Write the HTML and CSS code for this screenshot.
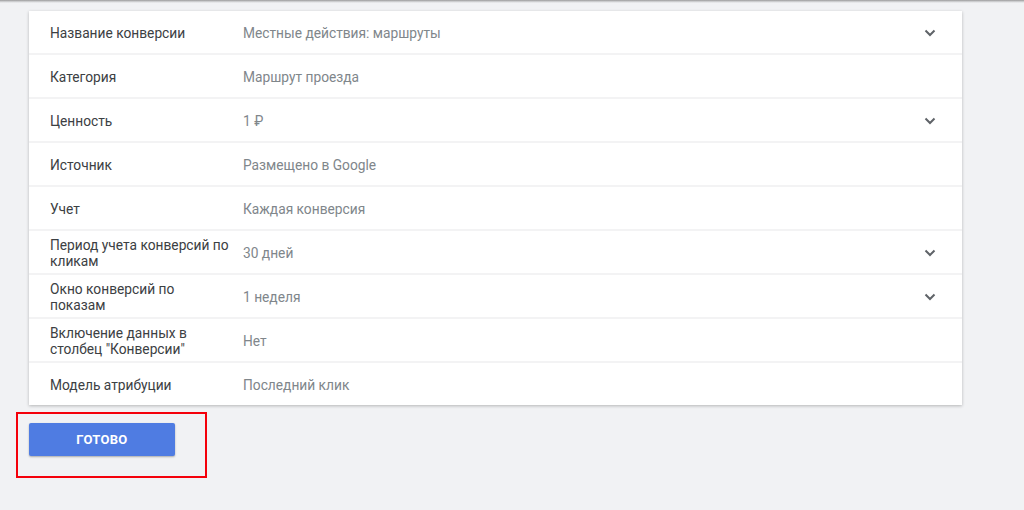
FILE: index.html
```html
<!DOCTYPE html>
<html>
  <head>
    <meta charset="utf-8">
    <title>Настройки конверсии</title>
    <link rel="stylesheet" href="styles.css">
  </head>
  <body>
    <div class="top-edge"></div>
    <div class="page">
      <div class="card">
        <div class="row">
          <div class="label">Название конверсии</div>
          <div class="value">Местные действия: маршруты</div>
          <svg class="chev" viewBox="0 0 12 8"><path d="M1.5 1.5 L6 6 L10.5 1.5"/></svg>
        </div>
        <div class="row">
          <div class="label">Категория</div>
          <div class="value">Маршрут проезда</div>
        </div>
        <div class="row">
          <div class="label">Ценность</div>
          <div class="value">1 ₽</div>
          <svg class="chev" viewBox="0 0 12 8"><path d="M1.5 1.5 L6 6 L10.5 1.5"/></svg>
        </div>
        <div class="row">
          <div class="label">Источник</div>
          <div class="value">Размещено в Google</div>
        </div>
        <div class="row">
          <div class="label">Учет</div>
          <div class="value">Каждая конверсия</div>
        </div>
        <div class="row">
          <div class="label">Период учета конверсий по кликам</div>
          <div class="value">30 дней</div>
          <svg class="chev" viewBox="0 0 12 8"><path d="M1.5 1.5 L6 6 L10.5 1.5"/></svg>
        </div>
        <div class="row">
          <div class="label">Окно конверсий по показам</div>
          <div class="value">1 неделя</div>
          <svg class="chev" viewBox="0 0 12 8"><path d="M1.5 1.5 L6 6 L10.5 1.5"/></svg>
        </div>
        <div class="row">
          <div class="label">Включение данных в столбец "Конверсии"</div>
          <div class="value">Нет</div>
        </div>
        <div class="row">
          <div class="label">Модель атрибуции</div>
          <div class="value">Последний клик</div>
        </div>
      </div>
      <div class="highlight">
        <button class="done-btn">Готово</button>
      </div>
    </div>
  </body>
</html>
```

FILE: styles.css
```css
html, body {
  margin: 0;
  padding: 0;
}
body {
  background-color: #f1f2f4;
  font-family: Roboto, "Noto Sans", sans-serif;
  font-size: 13.75px;
}
.top-edge {
  height: 3px;
  background: linear-gradient(#9a9a9a, #d6d7d9 60%, #f1f2f4);
}
.page {
  padding: 8px 0 0 29px;
}
.card {
  width: 933px;
  background-color: #fff;
  box-shadow: 0 1px 3px rgba(0, 0, 0, 0.25);
}
.row {
  display: flex;
  align-items: center;
  box-sizing: border-box;
  height: 44px;
  padding: 1px 26px 0 21px;
  border-bottom: 2px solid #f3f3f4;
}
.row:last-child {
  height: 42px;
  border-bottom: none;
}
.label {
  width: 181px;
  margin-right: 12px;
  color: #3c4043;
  line-height: 16px;
}
.value {
  flex: 1;
  color: #80868b;
}
.chev {
  width: 12px;
  height: 8px;
}
.chev path {
  fill: none;
  stroke: #5f6368;
  stroke-width: 2;
}
.highlight {
  width: 176px;
  height: 53px;
  margin: 7px 0 0 -13px;
  padding: 9px 0 0 11px;
  border: 2px solid #f4000a;
}
.done-btn {
  width: 146px;
  height: 33px;
  border: none;
  border-radius: 2px;
  background-color: #4f7ce2;
  color: #fff;
  font-family: Roboto, sans-serif;
  font-size: 13px;
  font-weight: bold;
  text-transform: uppercase;
  letter-spacing: 0.3px;
  box-shadow: 0 1px 2px rgba(0, 0, 0, 0.3);
  cursor: pointer;
}
```
